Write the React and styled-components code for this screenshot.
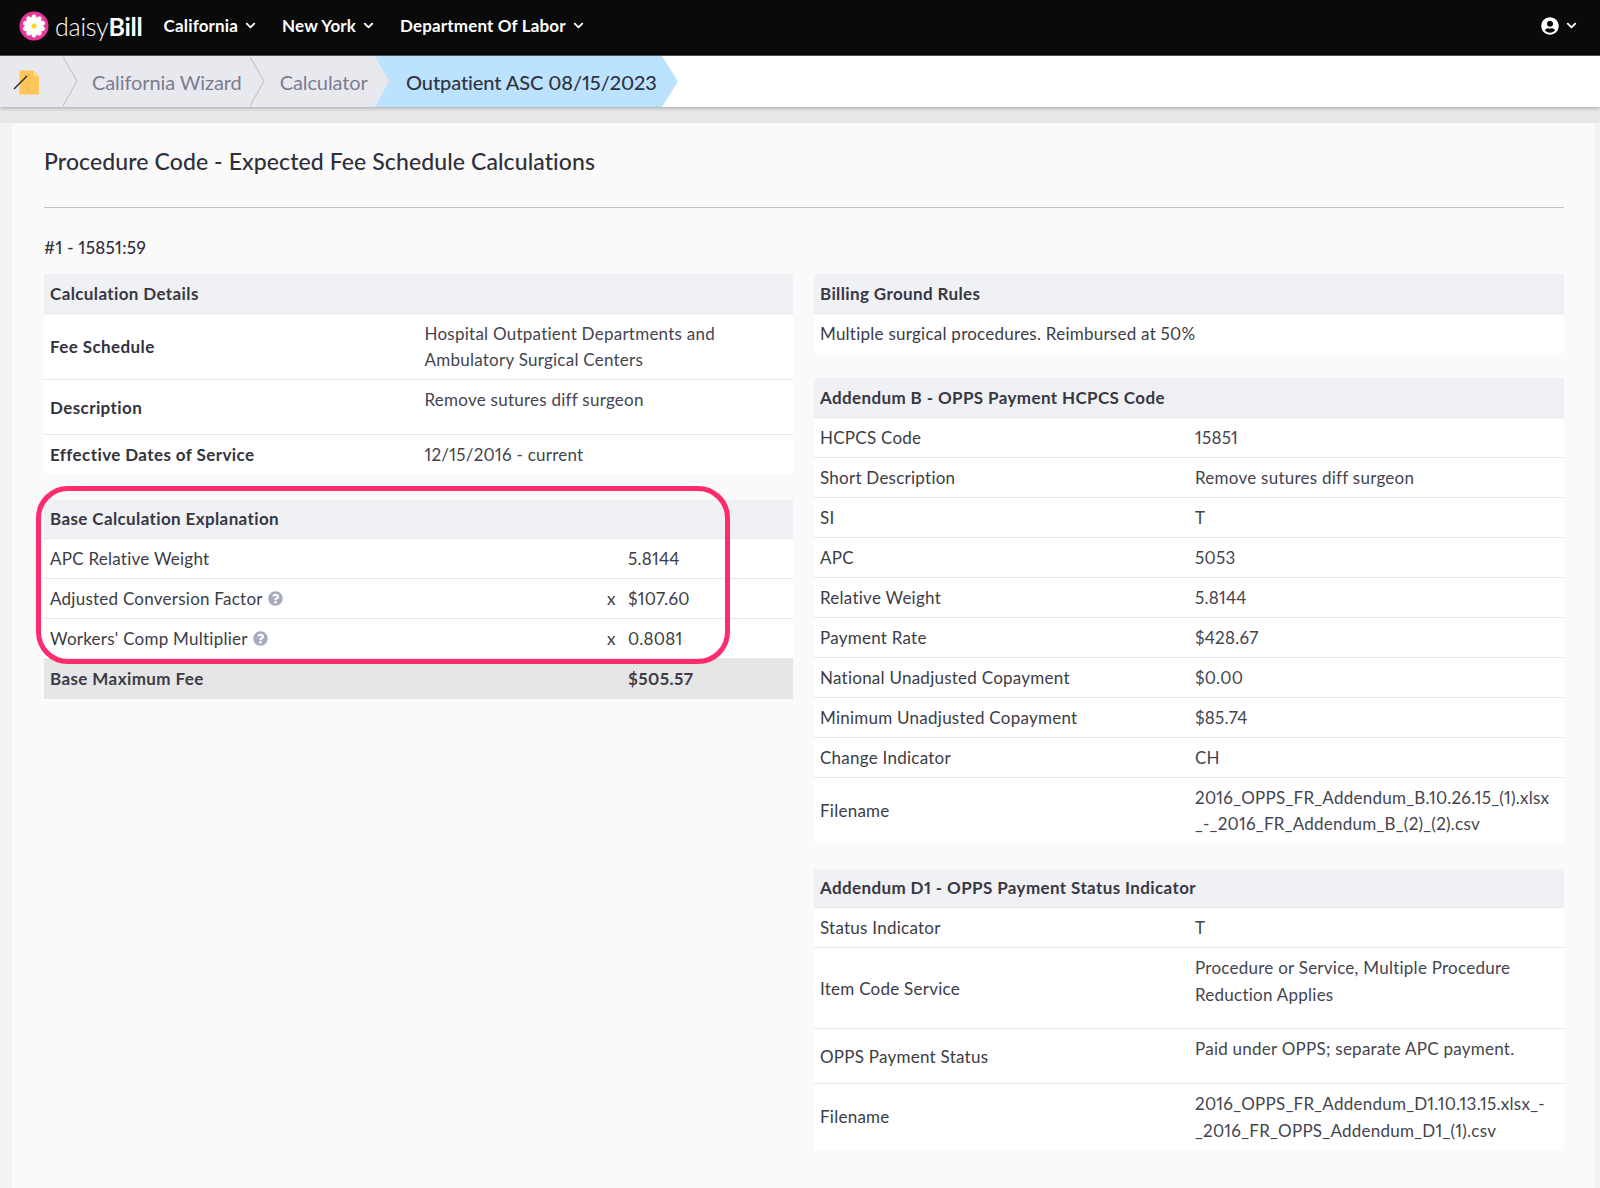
import React from "react";
import styled, { createGlobalStyle } from "styled-components";
import { FaQuestionCircle, FaUserCircle } from "react-icons/fa";
import { ChevronDown } from "lucide-react";

const Global = createGlobalStyle`
  html, body { margin: 0; padding: 0; background: #f3f3f3; }
  body {
    font-family: "Lato", "Liberation Sans", sans-serif; color: #32323c; height: 1188px; overflow: hidden;
    font-variant-numeric: proportional-nums;
  }
  * { box-sizing: border-box; }
`;

const Shell = styled.div`height: 1188px; display: flex; flex-direction: column; overflow: hidden;`;
const TopBar = styled.header`
  height: 56px; flex: none; background: #0a0a0a; display: flex; align-items: center; padding: 0 21px 4px 19px;
  border-bottom: 1px solid #555;
`;
const Logo = styled.div`display: flex; align-items: center; gap: 6px; margin-right: 21px;`;
const Wordmark = styled.span`
  color: #fff; font-size: 25px; font-weight: 300; letter-spacing: -0.2px;
  b { font-weight: 700; }
`;
const NavItem = styled.div`
  display: flex; align-items: center; gap: 5px; color: #fff; font-size: 17px; font-weight: 700; margin-right: 24px;
  letter-spacing: 0.15px;
`;
const Spacer = styled.div`flex: 1;`;
const UserMenu = styled.div`display: flex; align-items: center; gap: 5px; color: #fff;`;

const Crumbs = styled.nav`
  height: 51px; flex: none; background: #fff; display: flex; align-items: stretch;
  box-shadow: 0 1px 4px rgba(0,0,0,.3); position: relative; z-index: 1;
`;
const Trail = styled.div`display: flex; align-items: center; background: #e8e9ee; width: 375px; flex: none;`;
const IconCrumb = styled.div`width: 62px; flex: none; padding-left: 13px; display: flex; align-items: center;`;
const Crumb = styled.span`font-size: 20px; color: #7b7c8f; white-space: nowrap; letter-spacing: -0.1px;`;
const Sep = styled.svg`width: 16px; height: 51px; flex: none; margin: ${p => p.$margin};`;
const Current = styled.div`
  position: relative; width: 303px; display: flex; align-items: center; padding-left: 31px;
  background: linear-gradient(to right, #e8e9ee 14px, transparent 14px);
  font-size: 20px; color: #33333e; font-weight: 500; white-space: nowrap; letter-spacing: -0.1px;
  &::before {
    content: ""; position: absolute; inset: 0; background: #bbe2fe;
    clip-path: polygon(0 0, 287px 0, 100% 50%, 287px 100%, 0 100%, 14px 50%);
  }
  span { position: relative; }
`;

const Page = styled.main`flex: 1; background: linear-gradient(#e8e8e8 16px, #f3f3f3 16px); padding: 16px 5px 0 12px; display: flex;`;
const Card = styled.section`flex: 1; background: #fafafa; padding: 23px 31px 0 32px;`;
const Title = styled.h1`margin: 0; font-size: 23px; line-height: 30px; font-weight: 500; color: #2f2f39; padding-bottom: 31px; border-bottom: 1px solid #c4c4c8; letter-spacing: 0.1px;`;
const Code = styled.div`margin: 30px 0 16px; font-size: 17px; line-height: 20px; font-weight: 500; color: #2f2f39; letter-spacing: 0.35px;`;
const Columns = styled.div`display: grid; grid-template-columns: 749px 750px; column-gap: 21px; align-items: start;`;
const Column = styled.div`display: flex; flex-direction: column; gap: 25.5px;`;
const Section = styled.div`position: relative;`;
const SectionHead = styled.div`
  height: 39.5px; background: #f0f1f5; border-bottom: 1px solid #e6e7ea; display: flex; align-items: center;
  padding: 0 6px; font-size: 17px; font-weight: 700; color: #383842; letter-spacing: 0.38px;
`;
const Row = styled.div`
  display: grid; grid-template-columns: 50% 50%; background: #fff; border-bottom: 1px solid #e8e8ea; align-items: center;
  font-size: 17px; line-height: 26.5px; letter-spacing: 0.25px;
  &:last-child { border-bottom: none; }
`;
const Label = styled.div`
  padding: 7px 6px 5.5px; font-weight: ${p => (p.$bold ? 700 : 400)}; color: ${p => (p.$bold ? "#33333d" : "#3c3c46")};
  letter-spacing: ${p => (p.$bold ? "0.4px" : "inherit")};
  grid-column: ${p => (p.$wide ? "1 / -1" : "auto")};
`;
const Value = styled.div`
  padding: 7px 6px ${p => p.$pad || 5.5}px; color: #44444e; align-self: ${p => (p.$top ? "start" : "center")};
`;
const CalcRow = styled.div`
  display: grid; grid-template-columns: 551px 1fr; align-items: center; height: 40px; background: ${p => (p.$total ? "#e6e6e6" : "#fff")};
  border-bottom: ${p => (p.$total ? "none" : "1px solid #e8e8ea")}; font-size: 17px;
  padding: ${p => (p.$total ? "0 0 1px 6px" : "0 0 0 6px")};
  font-weight: ${p => (p.$total ? 700 : 400)}; color: #3c3c46; letter-spacing: ${p => (p.$total ? "0.4px" : "0.25px")};
`;
const CalcLabel = styled.div`display: flex; align-items: center; gap: 5px;`;
const CalcValue = styled.div`position: relative; padding-left: 27px;`;
const Times = styled.span`position: absolute; left: 6px; top: 0;`;
const Help = styled(FaQuestionCircle)`color: #a8aabf; width: 15px; height: 15px;`;
const Highlight = styled.div`
  position: absolute; left: -8px; top: -13.5px; width: 694px; height: 178px;
  border: 5px solid #fc2c6d; border-radius: 32px; pointer-events: none;
`;

const Chevron = () => <ChevronDown size={15} strokeWidth={3} />;

const Daisy = () => (
  <svg width="30" height="30" viewBox="0 0 30 30">
    <circle cx="15" cy="15" r="14.5" fill="#e8399a" />
    {[0, 36, 72, 108, 144, 180, 216, 252, 288, 324].map(a => (
      <ellipse key={a} cx="15" cy="8.500" rx="2.800" ry="5" fill="#fff" transform={`rotate(${a} 15 15)`} />
    ))}
    <circle cx="15" cy="15" r="2.500" fill="#ffd21f" />
  </svg>
);

const WizardDoc = () => (
  <svg width="28" height="28" viewBox="0 0 28 28">
    <path d="M6.500 2.500h14l5.500 5.500v18.500H6.500z" fill="#fcc65a" />
    <path d="M20.500 2.500l5.500 5.500h-5.500z" fill="#fddc8e" />
    <path d="M12 7l1 2M16 6v2M18 10l-1 1M15 14v2M15 20v2" stroke="#e9a832" strokeWidth="1" />
    <path d="M1 21 14 8" stroke="#2c2c2c" strokeWidth="1.500" />
  </svg>
);

const SepIcon = ({ margin }) => (
  <Sep $margin={margin} viewBox="0 0 16 51">
    <polyline points="1,1 15,25 1,50" fill="none" stroke="#c4c6cc" strokeWidth="1.200" />
  </Sep>
);

const Info = ({ label, value, top, pad, bold }) => (
  <Row>
    <Label $bold={bold}>{label}</Label>
    <Value $top={top} $pad={pad}>
      {value}
    </Value>
  </Row>
);

const addendumB = [
  ["HCPCS Code", "15851"],
  ["Short Description", "Remove sutures diff surgeon"],
  ["SI", "T"],
  ["APC", "5053"],
  ["Relative Weight", "5.8144"],
  ["Payment Rate", "$428.67"],
  ["National Unadjusted Copayment", "$0.00"],
  ["Minimum Unadjusted Copayment", "$85.74"],
  ["Change Indicator", "CH"],
  ["Filename", <>2016_OPPS_FR_Addendum_B.10.26.15_(1).xlsx<br />_-_2016_FR_Addendum_B_(2)_(2).csv</>],
];

export default function App() {
  return (
    <Shell>
      <Global />
      <TopBar>
        <Logo>
          <Daisy />
          <Wordmark>daisy<b>Bill</b></Wordmark>
        </Logo>
        <NavItem>California <Chevron /></NavItem>
        <NavItem>New York <Chevron /></NavItem>
        <NavItem>Department Of Labor <Chevron /></NavItem>
        <Spacer />
        <UserMenu>
          <FaUserCircle size={18} />
          <Chevron />
        </UserMenu>
      </TopBar>
      <Crumbs>
        <Trail>
          <IconCrumb><WizardDoc /></IconCrumb>
          <SepIcon margin="0 14px 0 0" />
          <Crumb>California Wizard</Crumb>
          <SepIcon margin="0 15px 0 7px" />
          <Crumb>Calculator</Crumb>
        </Trail>
        <Current><span>Outpatient ASC 08/15/2023</span></Current>
      </Crumbs>
      <Page>
        <Card>
          <Title>Procedure Code - Expected Fee Schedule Calculations</Title>
          <Code>#1 - 15851:59</Code>
          <Columns>
            <Column>
              <Section>
                <SectionHead>Calculation Details</SectionHead>
                <Info bold label="Fee Schedule" value={<>Hospital Outpatient Departments and<br />Ambulatory Surgical Centers</>} />
                <Info bold label="Description" value="Remove sutures diff surgeon" top pad={20.5} />
                <Info bold label="Effective Dates of Service" value="12/15/2016 - current" />
              </Section>
              <Section>
                <SectionHead>Base Calculation Explanation</SectionHead>
                <CalcRow>
                  <CalcLabel>APC Relative Weight</CalcLabel>
                  <CalcValue>5.8144</CalcValue>
                </CalcRow>
                <CalcRow>
                  <CalcLabel>Adjusted Conversion Factor <Help /></CalcLabel>
                  <CalcValue><Times>x</Times>$107.60</CalcValue>
                </CalcRow>
                <CalcRow>
                  <CalcLabel>Workers' Comp Multiplier <Help /></CalcLabel>
                  <CalcValue><Times>x</Times>0.8081</CalcValue>
                </CalcRow>
                <CalcRow $total>
                  <CalcLabel>Base Maximum Fee</CalcLabel>
                  <CalcValue>$505.57</CalcValue>
                </CalcRow>
                <Highlight />
              </Section>
            </Column>
            <Column>
              <Section>
                <SectionHead>Billing Ground Rules</SectionHead>
                <Row><Label $wide>Multiple surgical procedures. Reimbursed at 50%</Label></Row>
              </Section>
              <Section>
                <SectionHead>Addendum B - OPPS Payment HCPCS Code</SectionHead>
                {addendumB.map(([l, v]) => <Info key={l} label={l} value={v} />)}
              </Section>
              <Section>
                <SectionHead>Addendum D1 - OPPS Payment Status Indicator</SectionHead>
                <Info label="Status Indicator" value="T" />
                <Info label="Item Code Service" value={<>Procedure or Service, Multiple Procedure<br />Reduction Applies</>} top pad={20} />
                <Info label="OPPS Payment Status" value="Paid under OPPS; separate APC payment." top pad={20.5} />
                <Info label="Filename" value={<>2016_OPPS_FR_Addendum_D1.10.13.15.xlsx_-<br />_2016_FR_OPPS_Addendum_D1_(1).csv</>} />
              </Section>
            </Column>
          </Columns>
        </Card>
      </Page>
    </Shell>
  );
}
